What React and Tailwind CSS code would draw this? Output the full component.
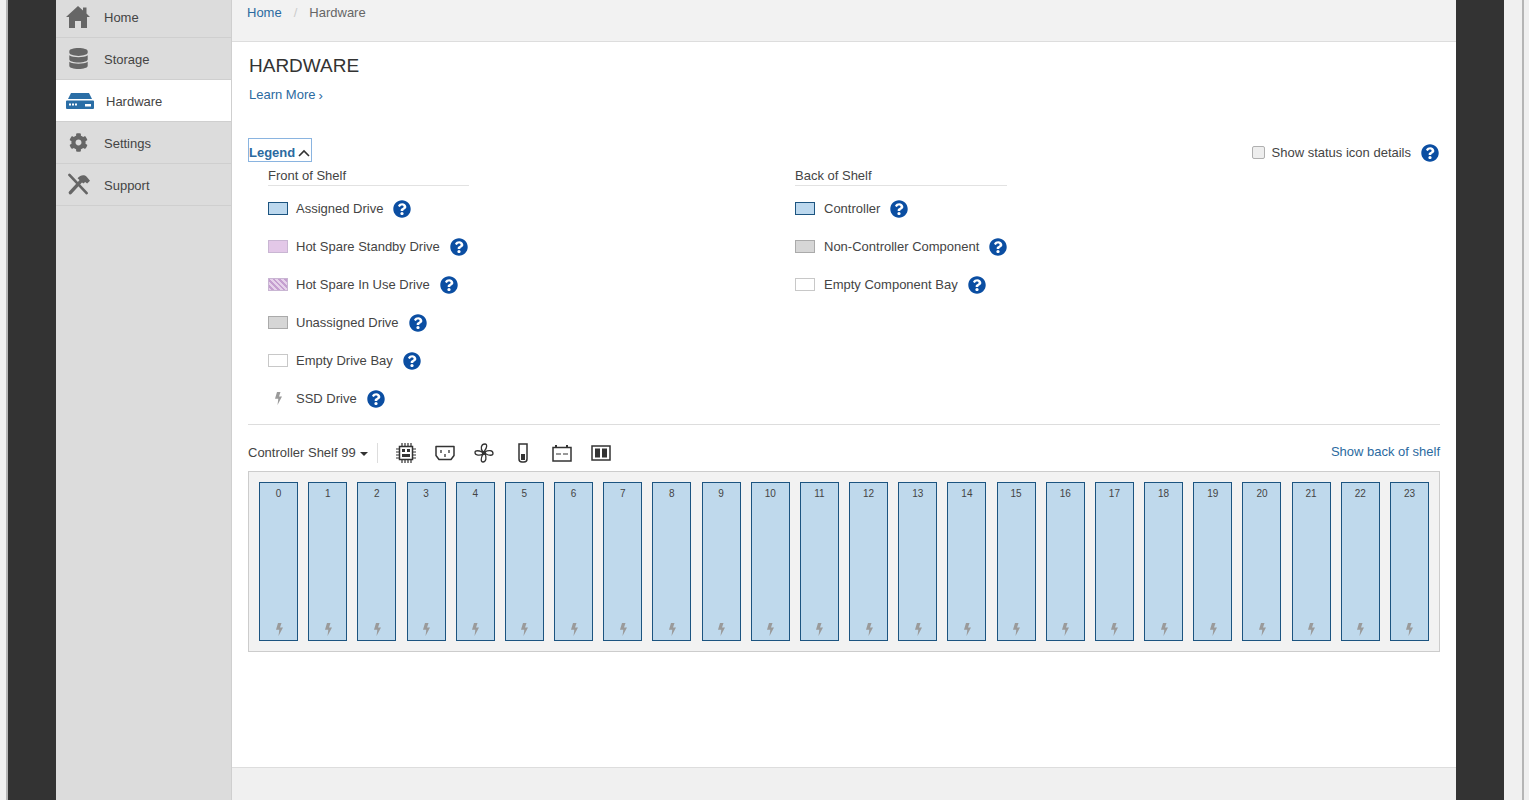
import React from "react";
import { FaDatabase, FaCog, FaQuestionCircle } from "react-icons/fa";

const frontLegend = [
  { label: "Assigned Drive", swatch: "border-[#1c5480] bg-[#bcd8ee]" },
  { label: "Hot Spare Standby Drive", swatch: "border-[#c9b6d3] bg-[#e3c8e8]" },
  { label: "Hot Spare In Use Drive", swatch: "border-[#c9b6d3] bg-[repeating-linear-gradient(45deg,#e6d2ea_0px,#e6d2ea_2px,#c59fd0_2px,#c59fd0_4px)]" },
  { label: "Unassigned Drive", swatch: "border-[#aaaaaa] bg-[#d6d6d6]" },
  { label: "Empty Drive Bay", swatch: "border-[#c8c8c8] bg-white" },
  { label: "SSD Drive", bolt: true },
];

const backLegend = [
  { label: "Controller", swatch: "border-[#1c5480] bg-[#bcd8ee]" },
  { label: "Non-Controller Component", swatch: "border-[#aaaaaa] bg-[#d6d6d6]" },
  { label: "Empty Component Bay", swatch: "border-[#c8c8c8] bg-white" },
];

const drives = Array.from({ length: 24 }, (_, i) => i);

function Bolt({ className }) {
  return (
    <svg viewBox="0 0 8 13" className={className} fill="#9a9a9a">
      <path d="M3 0h3.500L5 4.500h3L3.500 13l.8-6.300H1z" />
    </svg>
  );
}

function Help() {
  return <FaQuestionCircle className="h-[18px] w-[18px] shrink-0 text-[#0b4ea2]" />;
}

function HomeIcon() {
  return (
    <svg viewBox="0 0 24 22" className="h-[22px] w-[24px]" fill="#666666">
      <path d="M12 0 17 4.500V1.500h3.500V7.500L24 11h-3v11h-6v-7H9v7H3V11H0z" />
    </svg>
  );
}

function HardwareIcon() {
  return (
    <svg viewBox="0 0 28 16" className="h-4 w-7" fill="#2a6ea6">
      <path d="M5 0h18l3 6H2z" />
      <path d="M1 7.500h26a1 1 0 0 1 1 1V15a1 1 0 0 1-1 1H1a1 1 0 0 1-1-1V8.500a1 1 0 0 1 1-1z" />
      <path fill="#fff" d="M3 10.500h2v2H3zM6 10.500h2v2H6zM9 10.500h2v2H9zM19 11h6v2.500h-6z" />
    </svg>
  );
}

function ToolsIcon() {
  return (
    <svg viewBox="0 0 24 24" className="h-[23px] w-[23px]" fill="none" stroke="#666666">
      <path d="M2.500 2 20.500 21" strokeWidth="2.800" strokeLinecap="round" />
      <path d="M15 8 3.500 20.500" strokeWidth="3.600" strokeLinecap="round" />
      <path d="M11 5.500c3-3.500 7-4 9.500-1.500l3.500 4-3 3-2-1.500-2 1.500z" fill="#666666" strokeWidth="0" />
    </svg>
  );
}

function NavItem({ icon, label, active }) {
  return (
    <div className={`flex h-[42px] items-center border-b border-[#cfcfcf] ${active ? "bg-white pl-[10px]" : "bg-[#dcdcdc] pl-[8px]"}`}>
      <span className="flex w-[28px] justify-center">{icon}</span>
      <span className="ml-[12px] mt-[2px] text-[13px] text-[#444444]">{label}</span>
    </div>
  );
}

function LegendRow({ item, textGap }) {
  return (
    <div className="flex h-[38px] items-center">
      {item.bolt ? (
        <span className="flex w-[20px] justify-center"><Bolt className="h-[13px] w-2" /></span>
      ) : (
        <span className={`h-[13px] w-[20px] border ${item.swatch}`} />
      )}
      <span className={`${textGap} text-[13px] text-[#444444]`}>{item.label}</span>
      <span className="ml-[10px]"><Help /></span>
    </div>
  );
}

function ToolbarIcons() {
  const stroke = { fill: "none", stroke: "#333333", strokeWidth: 1.500 };
  return (
    <div className="flex items-center gap-[19px]">
      <svg viewBox="0 0 20 20" className="h-5 w-5" {...stroke}>
        <rect x="3.500" y="3.500" width="13" height="13" />
        <path d="M6 0v3M9 0v3M12 0v3M15 0v3M6 17v3M9 17v3M12 17v3M15 17v3M0 6h3M0 9h3M0 12h3M0 15h3M17 6h3M17 9h3M17 12h3M17 15h3" strokeWidth="1.200" />
        <path d="M6 6h3v3H6zM11 6h3v3h-3zM6 11h8v3H6z" fill="#333333" stroke="none" />
      </svg>
      <svg viewBox="0 0 20 16" className="h-4 w-5" {...stroke}>
        <path d="M1 1.500h18v9l-3 4H4l-3-4z" strokeLinejoin="round" />
        <path d="M6 5v3M14 5v3M10 9v3" strokeWidth="1.300" />
      </svg>
      <svg viewBox="0 0 20 20" className="h-5 w-5" fill="#333333">
        <circle cx="10" cy="10" r="1.800" />
        <path d="M9 9C6 6 7 1 11 1c2.500 0 2 4-.5 7zM11 9c3-2 8-2 8 1.500 0 2.500-4 2-7 .5zM11 11c2 3 1 8-2 8-2.500 0-2-4-.5-7zM9 11c-3 2-8 1.500-8-1.500 0-2.500 4-2 7-.5z" fill="none" stroke="#333333" strokeWidth="1.300" />
      </svg>
      <span className="flex w-5 justify-center">
        <svg viewBox="0 0 10 20" className="h-5 w-[10px]" {...stroke}>
          <path d="M1 1h8v15a3 3 0 0 1-3 3H4a3 3 0 0 1-3-3z" />
          <rect x="3" y="11" width="4" height="6" fill="#333333" stroke="none" />
        </svg>
      </span>
      <svg viewBox="0 0 20 18" className="h-[18px] w-5" {...stroke}>
        <rect x="1" y="3.500" width="18" height="13.500" />
        <path d="M4 1v2.500M15 1v2.500" strokeWidth="2" />
        <path d="M4 10h5M11 10h5" strokeWidth="1.200" />
      </svg>
      <svg viewBox="0 0 20 16" className="h-4 w-5" {...stroke}>
        <rect x="1" y="1" width="18" height="14" />
        <path d="M4 3.500h5v9H4zM11 3.500h5v9h-5z" fill="#333333" stroke="none" />
      </svg>
    </div>
  );
}

export default function App() {
  return (
    <div className="flex h-[800px] overflow-hidden bg-[#f0f0f0] font-['Liberation_Sans',Arial,sans-serif]">
      <div className="w-[8px] border-r-2 border-[#b5b5b5] bg-[#f0f0f0]" />
      <div className="w-[48px] bg-[#333333]" />

      <aside className="w-[176px] border-r border-[#cfcfcf] bg-[#dcdcdc]">
        <div className="-mt-[4px]">
          <NavItem icon={<HomeIcon />} label="Home" />
          <NavItem icon={<FaDatabase className="h-[21px] w-[19px] text-[#666666]" />} label="Storage" />
          <NavItem icon={<HardwareIcon />} label="Hardware" active />
          <NavItem icon={<FaCog className="h-[19px] w-[19px] text-[#666666]" />} label="Settings" />
          <NavItem icon={<ToolsIcon />} label="Support" />
        </div>
      </aside>

      <main className="flex w-[1224px] flex-col">
        <div className="flex h-[42px] items-start gap-[12px] border-b border-[#dddddd] bg-[#f2f2f2] pl-[15px] pt-[3px] text-[13px]">
          <span className="text-[#2b6aa0]">Home</span>
          <span className="text-[#cccccc]">/</span>
          <span className="text-[#666666]">Hardware</span>
        </div>

        <div className="h-[726px] border-b border-[#dddddd] bg-white px-[16px]">
          <h1 className="ml-[1px] mt-[12px] text-[19px] leading-[24px] text-[#333333]">HARDWARE</h1>
          <div className="ml-[1px] mt-[7px] flex items-center gap-[3px] text-[13px] leading-[20px] text-[#2b6aa0]">
            Learn More <span className="text-[13px] leading-none">›</span>
          </div>

          <div className="mt-[33px] flex items-start justify-between">
            <div className="flex h-[24px] items-end gap-[3px] border border-[#8ab4e0] pr-[1px] text-[13px] font-bold leading-[16px] text-[#2b6aa0]">
              Legend
              <svg viewBox="0 0 12 8" className="mb-[4px] h-2 w-3" fill="none" stroke="#333333" strokeWidth="1.600">
                <path d="M1 7 6 2l5 5" />
              </svg>
            </div>
            <div className="mt-[5px] flex items-center pr-[1px]">
              <span className="h-[13px] w-[13px] rounded-[2px] border border-[#b0b0b0] bg-[#eeeeee]" />
              <span className="ml-[7px] text-[13px] text-[#444444]">Show status icon details</span>
              <span className="ml-[10px]"><Help /></span>
            </div>
          </div>

          <div className="mt-[3px] flex pl-[20px]">
            <div className="w-[527px]">
              <div className="w-[201px] border-b border-[#e2e2e2] text-[13px] leading-[19px] text-[#444444]">Front of Shelf</div>
              <div className="mt-[4px]">
                {frontLegend.map((item) => <LegendRow key={item.label} item={item} textGap="ml-[8px]" />)}
              </div>
            </div>
            <div>
              <div className="w-[212px] border-b border-[#e2e2e2] text-[13px] leading-[19px] text-[#444444]">Back of Shelf</div>
              <div className="mt-[4px]">
                {backLegend.map((item) => <LegendRow key={item.label} item={item} textGap="ml-[9px]" />)}
              </div>
            </div>
          </div>

          <div className="mt-[6px] border-t border-[#dddddd]" />

          <div className="mt-[13px] flex h-[30px] items-center">
            <span className="text-[13px] text-[#444444]">Controller Shelf 99</span>
            <span className="ml-[4px] mt-[2px] h-0 w-0 border-x-[4px] border-t-[4px] border-x-transparent border-t-[#333333]" />
            <span className="ml-[9px] mr-[18px] h-[20px] border-l border-[#dddddd]" />
            <ToolbarIcons />
            <span className="-mt-[2px] ml-auto text-[13px] text-[#2b6aa0]">Show back of shelf</span>
          </div>

          <div className="mt-[3px] flex h-[181px] justify-between border border-[#cccccc] bg-[#f2f2f2] px-[10px] pt-[10px]">
            {drives.map((n) => (
              <div key={n} className="flex h-[159px] w-[39px] flex-col items-center justify-between border border-[#1c5480] bg-[#bfd9ec] pb-[4px] pt-[3px]">
                <span className="text-[10px] leading-[16px] text-[#444444]">{n}</span>
                <Bolt className="h-[13px] w-2" />
              </div>
            ))}
          </div>
        </div>
      </main>

      <div className="w-[48px] bg-[#333333]" />
      <div className="flex-1 bg-[#f0f0f0]">
        <div className="ml-[18px] h-full w-[2px] bg-[#b5b5b5]" />
      </div>
    </div>
  );
}
